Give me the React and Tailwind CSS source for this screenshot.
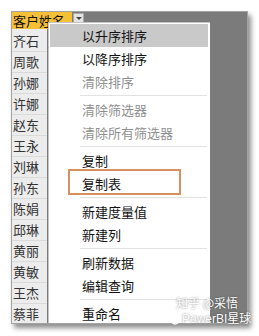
import React from 'react';

const names = ['齐石', '周歌', '孙娜', '许娜', '赵东', '王永', '刘琳', '孙东', '陈娟', '邱琳', '黄丽', '黄敏', '王杰', '蔡菲'];

const menu = [
  [
    { label: '以升序排序', active: true },
    { label: '以降序排序' },
    { label: '清除排序', disabled: true },
  ],
  [
    { label: '清除筛选器', disabled: true },
    { label: '清除所有筛选器', disabled: true },
  ],
  [{ label: '复制' }, { label: '复制表', marked: true }],
  [{ label: '新建度量值' }, { label: '新建列' }],
  [{ label: '刷新数据' }, { label: '编辑查询' }],
  [{ label: '重命名' }],
];

const font = { fontFamily: '"Noto Sans CJK SC", "Noto Sans", sans-serif' };

function MenuItem({ item }) {
  return (
    <div
      className={`relative h-[23px] flex items-center pl-[32px] text-[13px] ${
        item.active ? 'bg-[#c9c9c9] mr-[2px]' : ''
      } ${item.disabled ? 'text-[#8f8f8f]' : 'text-[#111]'}`}
    >
      {item.marked && (
        <span className="absolute left-[18px] w-[113px] top-[-3px] bottom-0 border-2 border-[#d98f5e]" />
      )}
      <span className="relative">{item.label}</span>
    </div>
  );
}

export default function App() {
  return (
    <div className="relative w-[259px] h-[336px] bg-white overflow-hidden" style={font}>
      {/* screenshot card */}
      <div className="relative ml-[11px] mt-[11px] w-[237px] h-[313px] bg-[#7b7b7b] border border-[#a3a3a3] shadow-[3px_4px_5px_rgba(0,0,0,0.45)] overflow-hidden">
        {/* header row */}
        <div className="flex h-[17px]">
          <div className="w-[60px] bg-[#f5c036] text-[13px] leading-[17px] pl-[1px] text-[#111] whitespace-nowrap overflow-hidden">
            客户姓名
          </div>
          <div className="ml-[1px] mt-[1px] w-[11px] h-[10px] bg-[#e4e4e4] border border-[#a8a8a8] flex items-center justify-center">
            <span className="block w-0 h-0 border-l-[3px] border-r-[3px] border-t-[3px] border-l-transparent border-r-transparent border-t-[#444]" />
          </div>
        </div>

        {/* name column */}
        <div className="w-[35px] h-full bg-[#ececec] pt-[2px]">
          {names.map((n) => (
            <div
              key={n}
              className="h-[21px] flex items-center pl-[1px] text-[13px] text-[#333] border-b border-[#dadada]"
            >
              {n}
            </div>
          ))}
        </div>

        {/* context menu */}
        <div className="absolute left-[36px] top-[10px] w-[162px] bottom-0 bg-white border-l border-t border-[#c4c4c4] pt-[1px] pl-[1px]">
          {menu.map((group, gi) => (
            <div key={gi}>
              {gi > 0 && (
                <div className="h-[5px] flex items-center">
                  <div className="ml-[30px] mr-[3px] flex-1 h-px bg-[#e2e2e2]" />
                </div>
              )}
              {group.map((item) => (
                <MenuItem key={item.label} item={item} />
              ))}
            </div>
          ))}
        </div>
      </div>

      {/* watermark */}
      <div className="absolute left-[170px] top-[294px] text-white [text-shadow:0_0_2px_rgba(0,0,0,0.5)]">
        <div className="pl-[6px] text-[12px] leading-[17px] whitespace-nowrap">知乎 @采悟</div>
        <div className="flex items-center gap-[2px] h-[17px] whitespace-nowrap">
          <svg width="10" height="10" viewBox="0 0 10 10" className="shrink-0">
            <circle cx="5" cy="5" r="4" fill="none" stroke="#fff" strokeWidth="1.4" />
            <circle cx="5" cy="5" r="1.5" fill="#fff" />
          </svg>
          <span
            className="text-[12px] leading-[17px]"
            style={{ fontFamily: '"Liberation Sans", "Noto Sans CJK SC", sans-serif' }}
          >
            PowerBI星球
          </span>
        </div>
      </div>
    </div>
  );
}
